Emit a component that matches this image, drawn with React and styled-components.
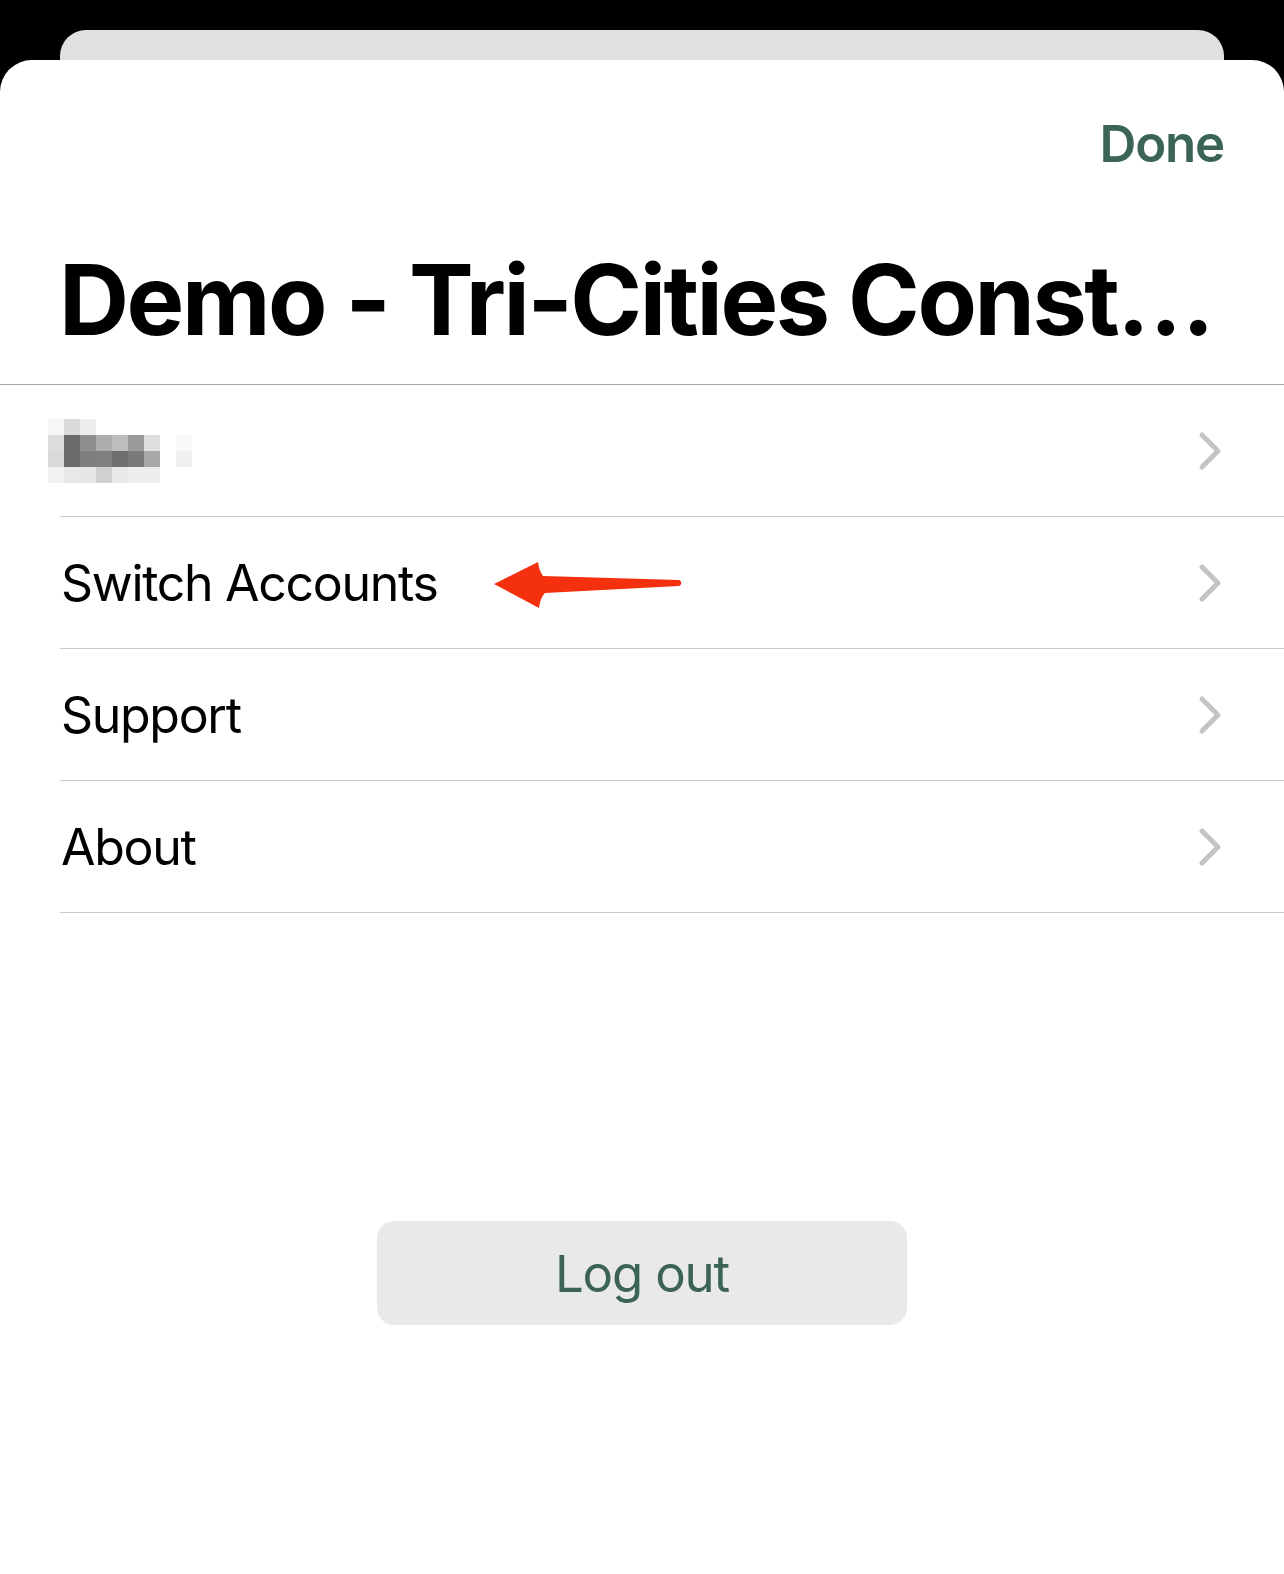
import React from "react";
import styled, { createGlobalStyle } from "styled-components";

const Global = createGlobalStyle`
  html, body { margin: 0; padding: 0; background: #000; }
  body { font-family: Inter, "Noto Sans", "Liberation Sans", sans-serif; -webkit-font-smoothing: antialiased; }
`;

const Page = styled.div`
  min-height: 1574px;
  padding-top: 30px;
  box-sizing: border-box;
  display: flex;
  flex-direction: column;
  background: #000;
`;

const BackCard = styled.div`
  margin: 0 60px;
  height: 30px;
  background: #e0e0e0;
  border-radius: 26px 26px 0 0;
`;

const Sheet = styled.div`
  flex: 1;
  background: #fff;
  border-radius: 32px 32px 0 0;
  display: flex;
  flex-direction: column;
`;

const NavBar = styled.div`
  display: flex;
  justify-content: flex-end;
  padding: 58px 60px 0 0;
`;

const DoneButton = styled.button`
  border: 0;
  background: none;
  padding: 0;
  font: 600 51px/51px Inter, "Noto Sans", sans-serif;
  color: #3c6357;
  letter-spacing: -1.2px;
`;

const Title = styled.h1`
  margin: 81px 0 0;
  padding: 0 40px 34px 59px;
  font: 700 97px/100px Inter, "Noto Sans", sans-serif;
  letter-spacing: -2.45px;
  color: #000;
  white-space: nowrap;
  border-bottom: 1px solid #a3a3a3;
`;

const List = styled.div`
  margin-left: 60px;
  display: flex;
  flex-direction: column;
`;

const Row = styled.div`
  position: relative;
  height: 131px;
  display: flex;
  align-items: center;
  justify-content: space-between;
  padding-right: 62px;
  border-bottom: 1px solid #c8c8ca;
`;

const Label = styled.span`
  font: 400 50px/51px Inter, "Noto Sans", sans-serif;
  letter-spacing: -1.3px;
  color: #000;
  padding-top: 2px;
  margin-left: 1px;
`;

const Pixelated = styled.div`
  margin-left: -12px;
  display: grid;
  grid-template-columns: repeat(9, 16px);
  grid-auto-rows: 16px;
  filter: blur(0.7px);
`;

const Cell = styled.div`
  background: ${(p) => p.$color};
`;

const Annotation = styled.svg`
  position: absolute;
  left: 433px;
  top: 44px;
  overflow: visible;
`;

const Footer = styled.div`
  display: flex;
  justify-content: center;
  padding-top: 308px;
`;

const LogoutButton = styled.button`
  width: 530px;
  height: 104px;
  border: 0;
  border-radius: 17px;
  background: #e9e9eb;
  color: #3c6357;
  font: 400 51px/51px Inter, "Noto Sans", sans-serif;
  letter-spacing: -1.2px;
`;

const Chevron = () => (
  <svg width="24" height="40" viewBox="0 0 24 40" aria-hidden="true">
    <polyline
      points="4,4 20,20 4,36"
      fill="none"
      stroke="#c4c4c6"
      strokeWidth="5"
      strokeLinecap="round"
      strokeLinejoin="round"
    />
  </svg>
);

const Arrow = () => (
  <Annotation width="192" height="50" viewBox="0 0 192 50" aria-hidden="true">
    <path
      d="M1,23 L45,1 C46,7 47,11 50,15 L186,19 C189,20 189,24 186,25 L52,32 C48,36 47,41 46,47 Z"
      fill="#f4300f"
    />
  </Annotation>
);

const pixels = [
  ["#f6f6f6", "#dadada", "#ededed", "#fff", "#fff", "#fff", "#fff", "#fff", "#fff"],
  ["#dcdcdc", "#6b6b6b", "#8f8f8f", "#adadad", "#bdbdbd", "#9a9a9a", "#dedede", "#fff", "#f8f8f8"],
  ["#d9d9d9", "#6a6a6a", "#7d7d7d", "#7f7f7f", "#6f6f6f", "#7a7a7a", "#a9a9a9", "#fff", "#f0f0f0"],
  ["#f1f1f1", "#e8e8e8", "#e7e7e7", "#d0d0d0", "#e9e9e9", "#eeeeee", "#eeeeee", "#fff", "#fff"],
];

export default function App() {
  return (
    <>
      <Global />
      <Page>
        <BackCard />
        <Sheet>
          <NavBar>
            <DoneButton>Done</DoneButton>
          </NavBar>
          <Title>Demo - Tri-Cities Const…</Title>
          <List>
            <Row>
              <Pixelated>
                {pixels.flat().map((c, i) => (
                  <Cell key={i} $color={c} />
                ))}
              </Pixelated>
              <Chevron />
            </Row>
            <Row>
              <Label>Switch Accounts</Label>
              <Arrow />
              <Chevron />
            </Row>
            <Row>
              <Label>Support</Label>
              <Chevron />
            </Row>
            <Row>
              <Label>About</Label>
              <Chevron />
            </Row>
          </List>
          <Footer>
            <LogoutButton>Log out</LogoutButton>
          </Footer>
        </Sheet>
      </Page>
    </>
  );
}
